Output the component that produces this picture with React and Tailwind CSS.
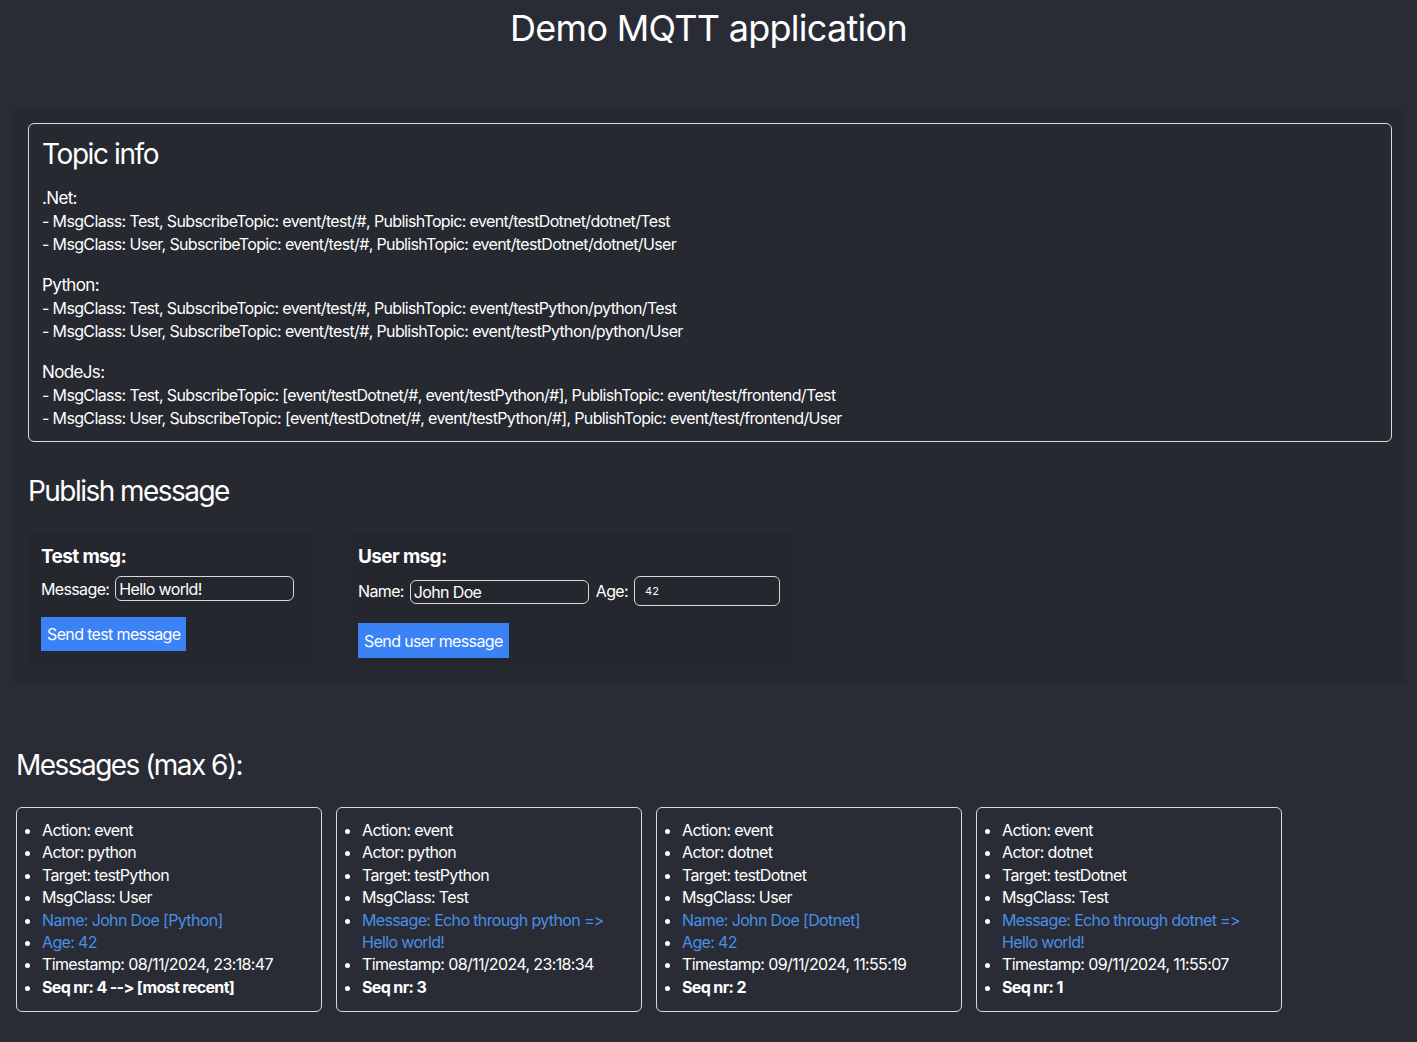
import React, { useState } from "react";

const topics = [
  {
    name: ".Net:",
    lines: [
      "- MsgClass: Test, SubscribeTopic: event/test/#, PublishTopic: event/testDotnet/dotnet/Test",
      "- MsgClass: User, SubscribeTopic: event/test/#, PublishTopic: event/testDotnet/dotnet/User",
    ],
  },
  {
    name: "Python:",
    lines: [
      "- MsgClass: Test, SubscribeTopic: event/test/#, PublishTopic: event/testPython/python/Test",
      "- MsgClass: User, SubscribeTopic: event/test/#, PublishTopic: event/testPython/python/User",
    ],
  },
  {
    name: "NodeJs:",
    lines: [
      "- MsgClass: Test, SubscribeTopic: [event/testDotnet/#, event/testPython/#], PublishTopic: event/test/frontend/Test",
      "- MsgClass: User, SubscribeTopic: [event/testDotnet/#, event/testPython/#], PublishTopic: event/test/frontend/User",
    ],
  },
];

const messages = [
  {
    actor: "python",
    target: "testPython",
    msgClass: "User",
    extra: ["Name: John Doe [Python]", "Age: 42"],
    ts: "08/11/2024, 23:18:47",
    seq: "4 --> [most recent]",
  },
  {
    actor: "python",
    target: "testPython",
    msgClass: "Test",
    extra: ["Message: Echo through python => Hello world!"],
    ts: "08/11/2024, 23:18:34",
    seq: "3",
  },
  {
    actor: "dotnet",
    target: "testDotnet",
    msgClass: "User",
    extra: ["Name: John Doe [Dotnet]", "Age: 42"],
    ts: "09/11/2024, 11:55:19",
    seq: "2",
  },
  {
    actor: "dotnet",
    target: "testDotnet",
    msgClass: "Test",
    extra: ["Message: Echo through dotnet => Hello world!"],
    ts: "09/11/2024, 11:55:07",
    seq: "1",
  },
];

const MessageCard = ({ msg }) => (
  <div className="w-[306px] border border-[#d9d9d9] rounded-md pt-[11px] pb-[13px] pl-[25px] pr-[36px]">
    <ul className="list-disc leading-[22.4px] marker:text-white">
      <li>Action: event</li>
      <li>Actor: {msg.actor}</li>
      <li>Target: {msg.target}</li>
      <li>MsgClass: {msg.msgClass}</li>
      {msg.extra.map((e) => (
        <li key={e} className="text-[#4a8fe7] marker:text-[#4a8fe7]">
          {e}
        </li>
      ))}
      <li>Timestamp: {msg.ts}</li>
      <li className="font-bold">Seq nr: {msg.seq}</li>
    </ul>
  </div>
);

const App = () => {
  const [testMsg, setTestMsg] = useState("Hello world!");
  const [name, setName] = useState("John Doe");
  const [age, setAge] = useState(42);

  return (
    <div
      className="min-h-screen bg-[#292c35] text-white pb-[30px] tracking-[-0.04em] [font-variant-ligatures:none]"
      style={{ fontFamily: "Inter, 'Noto Sans', sans-serif" }}
    >
      <h1 className="text-center text-[36px] leading-[56px] pt-0 tracking-[-0.02em]">
        Demo MQTT application
      </h1>

      {/* publish / topic panel */}
      <div className="ml-[14px] mr-[11px] mt-[54px] bg-[#262930] pt-[13px] pb-[13px] px-[14px]">
        <div className="border border-[#d9d9d9] rounded-md px-[13px] pt-[12px] pb-[12px]">
          <h2 className="text-[28px] leading-[36px] mb-[14px] tracking-[-0.05em]">Topic info</h2>
          <div className="flex flex-col gap-[18px] leading-[22.5px]">
            {topics.map((t) => (
              <div key={t.name}>
                <div className="text-[17px] leading-[24px]">{t.name}</div>
                {t.lines.map((l) => (
                  <div key={l}>{l}</div>
                ))}
              </div>
            ))}
          </div>
        </div>

        <h2 className="text-[28px] leading-[36px] mt-[31px] mb-[23px] tracking-[-0.055em]">
          Publish message
        </h2>

        <div className="flex gap-[32px] items-start">
          <div className="w-[285px] h-[138px] bg-[#24272e] px-[13px] pt-[13px]">
            <div className="text-[19px] font-bold leading-[24px] mb-[7px]">Test msg:</div>
            <div className="flex items-center gap-[6px]">
              <span>Message:</span>
              <input
                value={testMsg}
                onChange={(e) => setTestMsg(e.target.value)}
                className="w-[179px] h-[25px] border border-[#d9d9d9] rounded-md bg-transparent px-[3px] text-white outline-none"
              />
            </div>
            <button className="mt-[16px] bg-[#3b82f6] px-[6px] h-[34px] text-white">
              Send test message
            </button>
          </div>

          <div className="w-[454px] h-[139px] bg-[#24272e] px-[13px] pt-[13px]">
            <div className="text-[19px] font-bold leading-[24px] mb-[7px]">User msg:</div>
            <div className="flex items-center">
              <span className="mr-[6px]">Name:</span>
              <input
                value={name}
                onChange={(e) => setName(e.target.value)}
                className="w-[179px] h-[24px] border border-[#d9d9d9] rounded-md bg-transparent px-[3px] text-white outline-none mt-[2px]"
              />
              <span className="ml-[7px] mr-[6px]">Age:</span>
              <input
                type="number"
                value={age}
                onChange={(e) => setAge(e.target.value)}
                className="w-[146px] h-[30px] border border-[#d9d9d9] rounded-md bg-transparent px-[10px] text-[11px] tracking-normal text-white outline-none [appearance:textfield]"
              />
            </div>
            <button className="mt-[17px] bg-[#3b82f6] px-[6px] h-[35px] text-white">
              Send user message
            </button>
          </div>
        </div>
      </div>

      <h2 className="text-[28px] leading-[36px] ml-[16px] mt-[63px] mb-[24px] tracking-[-0.055em]">
        Messages (max 6):
      </h2>

      <div className="flex gap-[14px] ml-[16px] items-start">
        {messages.map((m) => (
          <MessageCard key={m.seq} msg={m} />
        ))}
      </div>
    </div>
  );
};

export default App;
